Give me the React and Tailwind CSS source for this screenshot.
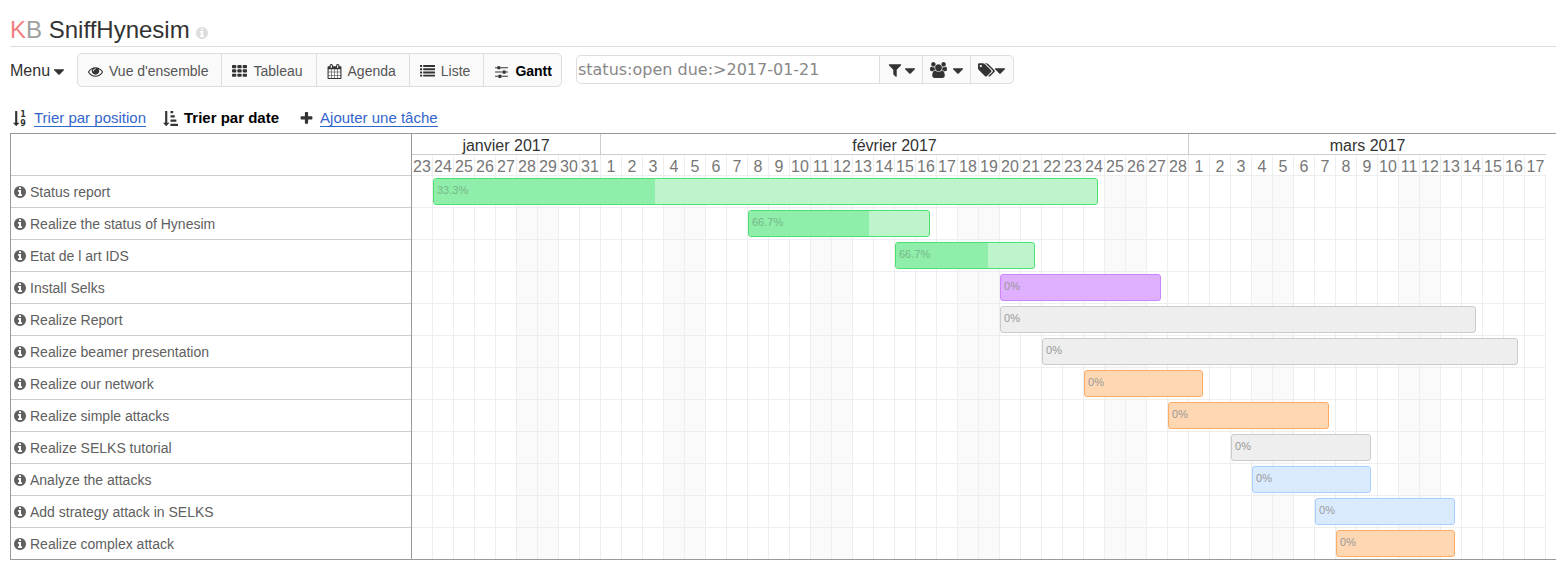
import React from "react";

const PATHS = {
  info: "M1152 1376v-160q0-14-9-23t-23-9h-96v-512q0-14-9-23t-23-9h-320q-14 0-23 9t-9 23v160q0 14 9 23t23 9h96v320h-96q-14 0-23 9t-9 23v160q0 14 9 23t23 9h448q14 0 23-9t9-23zm-128-896v-160q0-14-9-23t-23-9h-192q-14 0-23 9t-9 23v160q0 14 9 23t23 9h192q14 0 23-9t9-23zm640 416q0 209-103 385.5t-279.5 279.5-385.5 103-385.5-103-279.5-279.5-103-385.5 103-385.5 279.5-279.5 385.5-103 385.5 103 279.5 279.5 103 385.5z",
  eye: "M1664 960q-152-236-381-353 61 104 61 225 0 185-131.5 316.5t-316.5 131.5-316.5-131.5-131.5-316.5q0-121 61-225-229 117-381 353 133 205 333.5 326.5t434.5 121.5 434.5-121.5 333.5-326.5zm-720-384q0-20-14-34t-34-14q-125 0-214.5 89.5t-89.5 214.5q0 20 14 34t34 14 34-14 14-34q0-86 61-147t147-61q20 0 34-14t14-34zm848 384q0 34-20 69-140 230-376.5 368.5t-499.5 138.5-499.5-139-376.5-368q-20-35-20-69t20-69q140-229 376.5-368t499.5-139 499.5 139 376.5 368q20 35 20 69z",
  calendar: "M192 1664h288v-288h-288v288zm352 0h320v-288h-320v288zm-352-352h288v-320h-288v320zm352 0h320v-320h-320v320zm-352-384h288v-288h-288v288zm736 736h320v-288h-320v288zm-384-736h320v-288h-320v288zm768 736h288v-288h-288v288zm-384-352h320v-320h-320v320zm-352-864v-288q0-13-9.5-22.5t-22.5-9.5h-64q-13 0-22.5 9.5t-9.5 22.5v288q0 13 9.5 22.5t22.5 9.5h64q13 0 22.5-9.5t9.5-22.5zm736 864h288v-320h-288v320zm-384-384h320v-288h-320v288zm384 0h288v-288h-288v288zm32-480v-288q0-13-9.5-22.5t-22.5-9.5h-64q-13 0-22.5 9.5t-9.5 22.5v288q0 13 9.5 22.5t22.5 9.5h64q13 0 22.5-9.5t9.5-22.5zm384-64v1280q0 52-38 90t-90 38h-1408q-52 0-90-38t-38-90v-1280q0-52 38-90t90-38h128v-96q0-66 47-113t113-47h64q66 0 113 47t47 113v96h384v-96q0-66 47-113t113-47h64q66 0 113 47t47 113v96h128q52 0 90 38t38 90z",
  sliders: "M480 1408v128h-352v-128h352zm352-128q26 0 45 19t19 45v256q0 26-19 45t-45 19h-256q-26 0-45-19t-19-45v-256q0-26 19-45t45-19h256zm160-384v128h-864v-128h864zm-640-512v128h-224v-128h224zm1312 1024v128h-736v-128h736zm-960-1152q26 0 45 19t19 45v256q0 26-19 45t-45 19h-256q-26 0-45-19t-19-45v-256q0-26 19-45t45-19h256zm640 512q26 0 45 19t19 45v256q0 26-19 45t-45 19h-256q-26 0-45-19t-19-45v-256q0-26 19-45t45-19h256zm320 128v128h-224v-128h224zm0-512v128h-864v-128h864z",
  filter: "M1595 295q17 41-14 70l-493 493v742q0 42-39 59-13 5-25 5-27 0-45-19l-256-256q-19-19-19-45v-486l-493-493q-31-29-14-70 17-39 59-39h1280q42 0 59 39z",
  plus: "M1600 736v192q0 40-28 68t-68 28h-416v416q0 40-28 68t-68 28h-192q-40 0-68-28t-28-68v-416h-416q-40 0-68-28t-28-68v-192q0-40 28-68t68-28h416v-416q0-40 28-68t68-28h192q40 0 68 28t28 68v416h416q40 0 68 28t28 68z",
  users: "M593 896q-162 5-265 128h-134q-82 0-138-40.5t-56-118.5q0-353 124-353 6 0 43.5 21t97.5 42.5 119 21.5q67 0 133-23-5 37-5 66 0 139 81 256zm1071 637q0 120-73 189.5t-194 69.5h-874q-121 0-194-69.5t-73-189.5q0-53 3.5-103.5t14-109 26.5-108.5 43-97.5 62-81 85.5-53.5 111.5-20q10 0 43 21.5t73 48 107 48 135 21.5 135-21.5 107-48 73-48 43-21.5q61 0 111.5 20t85.5 53.5 62 81 43 97.5 26.5 108.5 14 109 3.5 103.5zm-1024-1277q0 106-75 181t-181 75-181-75-75-181 75-181 181-75 181 75 75 181zm704 384q0 159-112.5 271.5t-271.5 112.5-271.5-112.5-112.5-271.5 112.5-271.5 271.5-112.5 271.5 112.5 112.5 271.5zm576 225q0 78-56 118.5t-138 40.5h-134q-103-123-265-128 81-117 81-256 0-29-5-66 66 23 133 23 59 0 119-21.5t97.5-42.5 43.5-21q124 0 124 353zm-128-609q0 106-75 181t-181 75-181-75-75-181 75-181 181-75 181 75 75 181z",
  tags: "M448 448q0-53-37.5-90.5t-90.5-37.5-90.5 37.5-37.5 90.5 37.5 90.5 90.5 37.5 90.5-37.5 37.5-90.5zm1067 576q0 53-37 90l-491 492q-39 37-91 37-53 0-90-37l-715-716q-38-37-64.5-101t-26.5-117v-416q0-52 38-90t90-38h416q53 0 117 26.5t102 64.5l715 714q37 39 37 91zm384 0q0 53-37 90l-491 492q-39 37-91 37-36 0-59-14t-53-45l470-470q37-37 37-90 0-52-37-91l-715-714q-38-38-102-64.5t-117-26.5h224q53 0 117 26.5t102 64.5l715 714q37 39 37 91z",
};

const ARROW =
  "M736 1440q0 12-10 24l-319 319q-10 9-23 9-12 0-23-9l-320-320q-15-16-7-35 8-20 30-20h192v-1376q0-14 9-23t23-9h192q14 0 23 9t9 23v1376h192q14 0 23 9t9 23z";

function Icon({ name, box = "0 0 1792 1792", className = "size-4" }) {
  return (
    <svg viewBox={box} fill="currentColor" aria-hidden="true" className={`shrink-0 ${className}`}>
      <path d={PATHS[name]} />
    </svg>
  );
}

function Caret() {
  return (
    <svg viewBox="0 0 1024 576" fill="currentColor" aria-hidden="true" className="mt-[2px] h-[6px] w-[10px] shrink-0">
      <path d="M1024 64q0 26-19 45l-448 448q-19 19-45 19t-45-19l-448-448q-19-19-19-45t19-45 45-19h896q26 0 45 19t19 45z" />
    </svg>
  );
}

function GridIcon() {
  return (
    <svg viewBox="0 0 1792 1792" fill="currentColor" aria-hidden="true" className="size-[15px] shrink-0">
      {[128, 640, 1152].map((y) =>
        [0, 640, 1280].map((x) => <rect key={`${x}-${y}`} x={x} y={y} width="512" height="384" rx="96" />)
      )}
    </svg>
  );
}

function ListIcon() {
  return (
    <svg viewBox="0 0 1792 1792" fill="currentColor" aria-hidden="true" className="size-[15px] shrink-0">
      {[128, 512, 896, 1280].map((y) => (
        <g key={y}>
          <rect x="0" y={y} width="256" height="224" rx="32" />
          <rect x="384" y={y} width="1408" height="224" rx="32" />
        </g>
      ))}
    </svg>
  );
}

function SortNumeric() {
  return (
    <svg viewBox="0 0 1792 1792" fill="currentColor" aria-hidden="true" className="size-[15px] shrink-0 overflow-visible">
      <path d={ARROW} />
      <text x="860" y="720" fontSize="960" fontWeight="700" fontFamily="DejaVu Sans">1</text>
      <text x="860" y="1760" fontSize="960" fontWeight="700" fontFamily="DejaVu Sans">9</text>
    </svg>
  );
}

function SortAmount() {
  return (
    <svg viewBox="0 0 1792 1792" fill="currentColor" aria-hidden="true" className="size-[15px] shrink-0">
      <path d={ARROW} />
      <rect x="896" y="0" width="320" height="256" rx="32" />
      <rect x="896" y="512" width="512" height="256" rx="32" />
      <rect x="896" y="1024" width="704" height="256" rx="32" />
      <rect x="896" y="1536" width="896" height="256" rx="32" />
    </svg>
  );
}

const VIEWS = [
  { label: "Vue d'ensemble", icon: <Icon name="eye" className="size-[15px]" /> },
  { label: "Tableau", icon: <GridIcon /> },
  { label: "Agenda", icon: <Icon name="calendar" className="size-[15px]" /> },
  { label: "Liste", icon: <ListIcon /> },
  { label: "Gantt", icon: <Icon name="sliders" className="size-[15px]" />, active: true },
];

const DAY = 21;

const MONTHS = [
  { name: "janvier 2017", first: 23, last: 31 },
  { name: "février 2017", first: 1, last: 28 },
  { name: "mars 2017", first: 1, last: 17 },
];

const DAYS = MONTHS.flatMap((m) =>
  Array.from({ length: m.last - m.first + 1 }, (_, i) => m.first + i)
);

// The timeline opens on a Monday.
const isWeekend = (i) => i % 7 === 5 || i % 7 === 6;

const COLORS = {
  green: { bar: "border-[#4ae371] bg-[#bdf4cb]", fill: "bg-[#8feeaa]", text: "text-[#76b889]" },
  purple: { bar: "border-[#cd85fe] bg-[#dfb0ff]", fill: "", text: "text-[#999]" },
  grey: { bar: "border-[#ccc] bg-[#eee]", fill: "", text: "text-[#999]" },
  orange: { bar: "border-[#ffac62] bg-[#ffd7b3]", fill: "", text: "text-[#999]" },
  blue: { bar: "border-[#a8cfff] bg-[#dbebff]", fill: "", text: "text-[#999]" },
};

const TASKS = [
  { title: "Status report", start: 1, days: 32, progress: 33.3, color: "green" },
  { title: "Realize the status of Hynesim", start: 16, days: 9, progress: 66.7, color: "green" },
  { title: "Etat de l art IDS", start: 23, days: 7, progress: 66.7, color: "green" },
  { title: "Install Selks", start: 28, days: 8, progress: 0, color: "purple" },
  { title: "Realize Report", start: 28, days: 23, progress: 0, color: "grey" },
  { title: "Realize beamer presentation", start: 30, days: 23, progress: 0, color: "grey" },
  { title: "Realize our network", start: 32, days: 6, progress: 0, color: "orange" },
  { title: "Realize simple attacks", start: 36, days: 8, progress: 0, color: "orange" },
  { title: "Realize SELKS tutorial", start: 39, days: 7, progress: 0, color: "grey" },
  { title: "Analyze the attacks", start: 40, days: 6, progress: 0, color: "blue" },
  { title: "Add strategy attack in SELKS", start: 43, days: 7, progress: 0, color: "blue" },
  { title: "Realize complex attack", start: 44, days: 6, progress: 0, color: "orange" },
];

function Bar({ task }) {
  const c = COLORS[task.color];
  return (
    <div
      className={`absolute top-[2px] h-[27px] overflow-hidden rounded-[3px] border ${c.bar}`}
      style={{ left: task.start * DAY, width: task.days * DAY - 7 }}
    >
      <div className={`h-full ${c.fill}`} style={{ width: `${task.progress}%` }}>
        <span className={`block pt-[3px] pl-[3px] text-[11px] leading-4 ${c.text}`}>{task.progress}%</span>
      </div>
    </div>
  );
}

function Gantt() {
  return (
    <section className="flex overflow-hidden border-y border-l border-[#999]">
      <div className="w-[401px] shrink-0 border-r border-[#999]">
        <div className="h-[42px] border-b border-[#ccc]" />
        <ul>
          {TASKS.map((t) => (
            <li
              key={t.title}
              className="flex h-8 items-center border-b border-[#ccc] pt-px pl-[3px] text-[14px] text-[#606060] last:h-[31px] last:border-b-0"
            >
              <Icon name="info" box="128 128 1536 1536" className="mr-1 size-3" />
              <a href="#task" className="leading-5">{t.title}</a>
            </li>
          ))}
        </ul>
      </div>
      <div>
        <div className="flex h-[21px] border-b border-[#ccc] text-[16px] leading-6 text-[#333]">
          {MONTHS.map((m) => (
            <div
              key={m.name}
              className="border-r border-[#ccc] text-center last:border-r-0"
              style={{ width: (m.last - m.first + 1) * DAY }}
            >
              {m.name}
            </div>
          ))}
        </div>
        <div className="flex h-[21px] border-b border-[#eee] text-[16px] leading-6 text-[#777]">
          {DAYS.map((d, i) => (
            <div key={i} className="w-[21px] border-r border-[#eee] text-center last:border-r-0">
              {d}
            </div>
          ))}
        </div>
        {TASKS.map((t) => (
          <div key={t.title} className="relative flex h-8 border-b border-[#eee] last:h-[31px] last:border-b-0">
            {DAYS.map((_, i) => (
              <div
                key={i}
                className={`w-[21px] border-r border-[#eee] last:border-r-0 ${isWeekend(i) ? "bg-[#fafafa]" : ""}`}
              />
            ))}
            <Bar task={t} />
          </div>
        ))}
      </div>
    </section>
  );
}

export default function App() {
  return (
    <div className="bg-white pb-1 pl-[10px] font-['Liberation_Sans',Arial,sans-serif] text-[#333]">
      <header className="flex h-[47px] items-center border-b border-[#ddd] pt-[14px]">
        <h1 className="text-[24px] leading-8">
          <a href="#home">
            <span className="text-[#f08080]">K</span>
            <span className="text-[#a0a0a0]">B</span>
          </a>{" "}
          SniffHynesim
        </h1>
        <Icon name="info" box="128 128 1536 1536" className="mt-[5px] ml-[6px] size-3 text-[#ddd]" />
      </header>

      <div className="mt-[6px] flex items-center">
        <button type="button" className="flex items-center gap-1 pt-[2px] text-[16px]">
          Menu
          <Caret />
        </button>
        <nav className="ml-[13px] flex h-[34px] rounded-[5px] border border-[#ddd] bg-[#fafafa] text-[14px]">
          {VIEWS.map((v) => (
            <a
              key={v.label}
              href="#view"
              className="flex items-center gap-[6px] border-r border-[#ddd] pt-[2px] pr-[13px] pl-[10px] last:border-r-0 last:pr-[9px]"
            >
              {v.icon}
              <span className={v.active ? "font-bold text-black" : "text-[#555]"}>{v.label}</span>
            </a>
          ))}
        </nav>
        <form className="mb-[2px] ml-[14px] flex h-[29px] rounded-[5px] border border-[#ddd] bg-[#fafafa]">
          <input
            type="text"
            aria-label="Filtre"
            defaultValue="status:open due:>2017-01-21"
            className="w-[303px] rounded-l-[5px] border-r border-[#ddd] bg-white px-px pt-px font-['DejaVu_Sans',sans-serif] text-[16px] text-[#888] outline-none"
          />
          <button type="button" aria-label="Filtres" className="flex w-[43px] items-center justify-center gap-[2px] border-r border-[#ddd] pt-px">
            <Icon name="filter" />
            <Caret />
          </button>
          <button type="button" aria-label="Utilisateurs" className="flex w-12 items-center justify-center gap-[6px] border-r border-[#ddd] pt-px">
            <Icon name="users" box="0 0 1920 1792" className="h-4 w-[17px]" />
            <Caret />
          </button>
          <button type="button" aria-label="Catégories" className="flex w-[42px] items-center justify-center pt-px">
            <Icon name="tags" box="0 0 1920 1792" className="h-4 w-[17px]" />
            <Caret />
          </button>
        </form>
      </div>

      <div className="mt-[21px] mb-[5px] flex h-5 items-center pl-[3px] text-[15px]">
        <SortNumeric />
        <a href="#position" className="ml-[6px] border-b border-[#36c] leading-4 text-[#36c]">
          Trier par position
        </a>
        <span className="ml-[17px] flex items-center gap-[6px]">
          <SortAmount />
          <a href="#date" className="font-bold text-black">Trier par date</a>
        </span>
        <span className="ml-5 flex items-center gap-[6px]">
          <Icon name="plus" className="size-[15px]" />
          <a href="#add" className="border-b border-[#36c] leading-4 text-[#36c]">
            Ajouter une tâche
          </a>
        </span>
      </div>

      <Gantt />
    </div>
  );
}
